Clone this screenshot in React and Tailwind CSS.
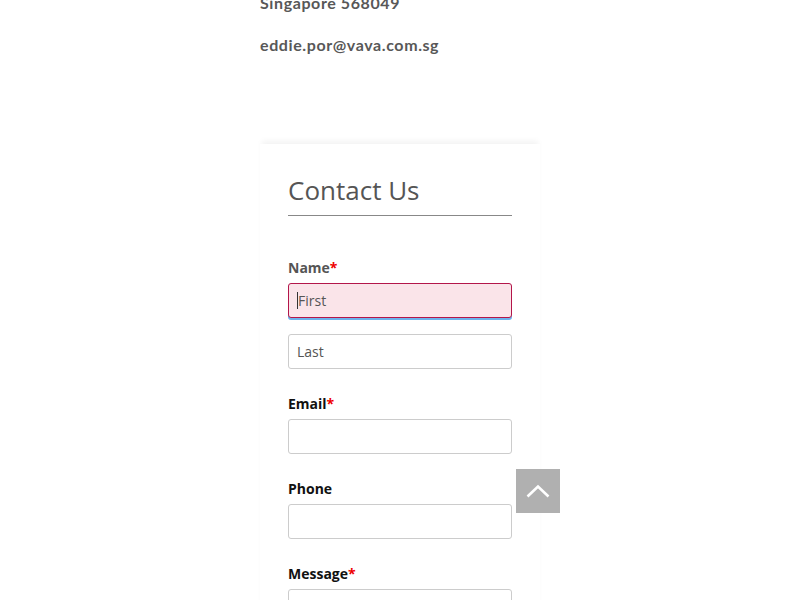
const labelCls = "block text-[14px] leading-[20px] font-bold mb-[5px]";

function Field({ label, required, muted, children }) {
  return (
    <div className="mt-[25px] first:mt-0">
      <label className={`${labelCls} ${muted ? "text-[#555]" : "text-[#111]"}`}>
        {label}
        {required && <span className="text-[#e00]">*</span>}
      </label>
      {children}
    </div>
  );
}

function Box({ text }) {
  return (
    <div className="h-[35px] w-full rounded-[3px] border border-[#ccc] bg-white px-2 flex items-center text-[14px] text-[#555]">
      {text}
    </div>
  );
}

export default function App() {
  return (
    <div className="min-h-[600px] overflow-hidden bg-white font-['Open_Sans',sans-serif]">
      <div className="w-[280px] ml-[260px]">
        {/* address tail */}
        <div className="font-['Lato',sans-serif] font-bold text-[16px] leading-[24px] tracking-[0.6px] text-[#585858]">
          <p className="-mt-[9px]">Singapore 568049</p>
          <p className="mt-[18px]">eddie.por@vava.com.sg</p>
        </div>

        {/* contact card */}
        <div className="mt-[87px] bg-white shadow-[0_-5px_6px_-2px_rgba(0,0,0,0.05)] px-7 pt-7 pb-10">
          <h2 className="text-[26px] leading-[36px] text-[#555] pb-[7px] border-b border-[#888]">
            Contact Us
          </h2>

          <div className="mt-[42px]">
            <Field label="Name" required muted>
              <div className="h-[35px] w-full rounded-[3px] border border-[#b3164a] bg-[#fae4e9] px-2 flex items-center text-[14px] text-[#555] shadow-[0_2px_0_0_#6cb2ec]">
                <span className="inline-block w-px h-[17px] bg-[#333]"></span>
                First
              </div>
              <div className="mt-4">
                <Box text="Last" />
              </div>
            </Field>
            <Field label="Email" required>
              <Box />
            </Field>
            <Field label="Phone">
              <Box />
            </Field>
            <Field label="Message" required>
              <div className="h-[90px] w-full rounded-[3px] border border-[#ccc] bg-white"></div>
            </Field>
          </div>
        </div>
      </div>

      {/* back to top */}
      <button className="fixed left-[516px] top-[469px] w-[44px] h-[44px] bg-[#b0b0b0] flex items-center justify-center">
        <svg width="24" height="14" viewBox="0 0 24 14" fill="none" stroke="#fff" strokeWidth="2.6">
          <polyline points="1.5,12.5 12,2.5 22.5,12.5" />
        </svg>
      </button>
    </div>
  );
}
